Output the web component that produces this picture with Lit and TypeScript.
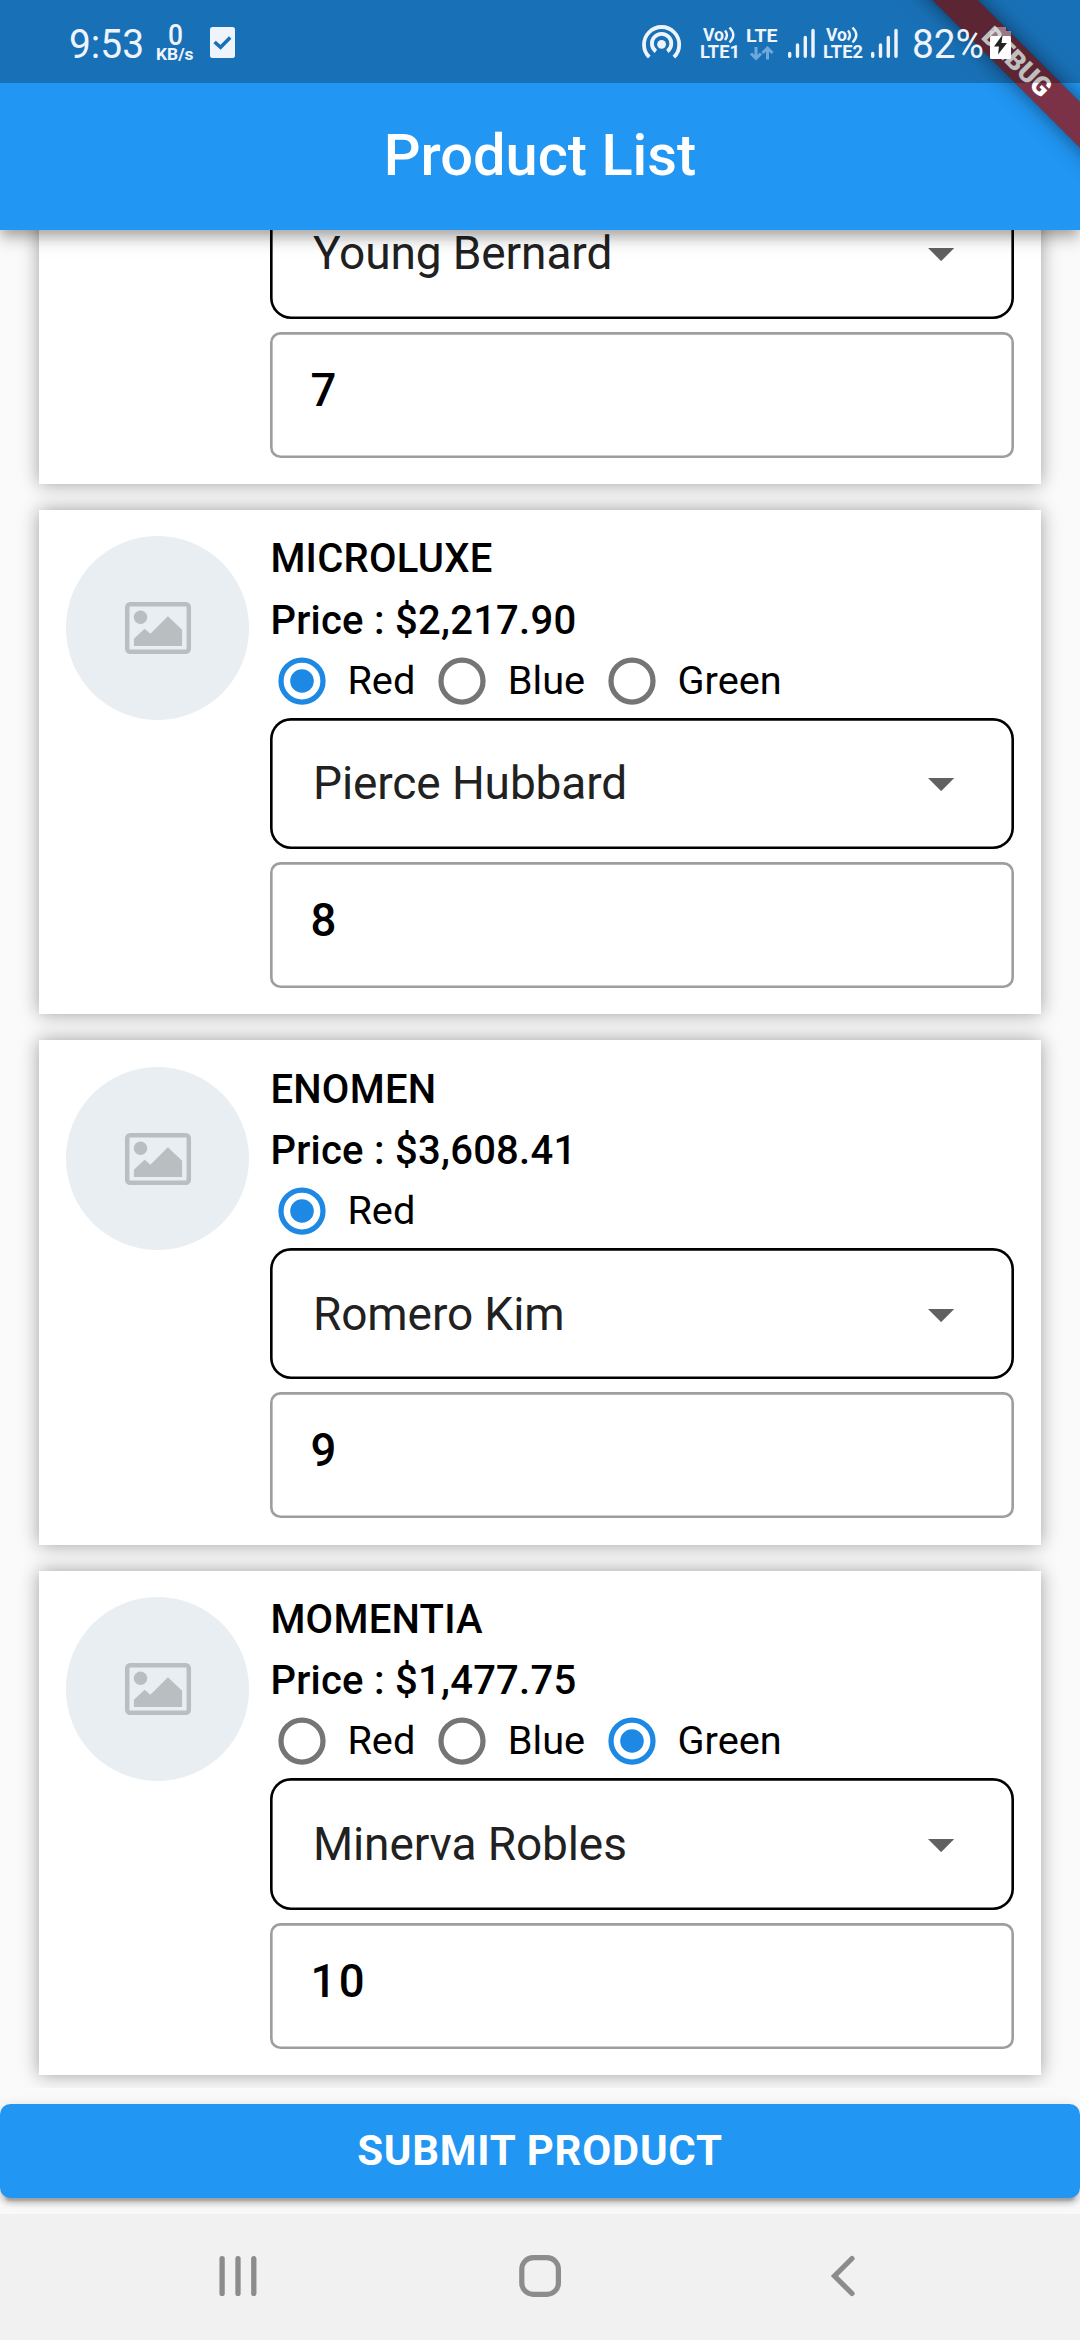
import { LitElement, html, css, svg, nothing } from "lit";
import { customElement, property } from "lit/decorators.js";

interface Product {
  name?: string;
  price?: string;
  colors: string[];
  selected?: string;
  person: string;
  quantity: string;
}

const PRODUCTS: Product[] = [
  { colors: [], person: "Young Bernard", quantity: "7" },
  { name: "MICROLUXE", price: "$2,217.90", colors: ["Red", "Blue", "Green"], selected: "Red", person: "Pierce Hubbard", quantity: "8" },
  { name: "ENOMEN", price: "$3,608.41", colors: ["Red"], selected: "Red", person: "Romero Kim", quantity: "9" },
  { name: "MOMENTIA", price: "$1,477.75", colors: ["Red", "Blue", "Green"], selected: "Green", person: "Minerva Robles", quantity: "10" },
];

@customElement("product-card")
export class ProductCard extends LitElement {
  @property({ attribute: false }) product!: Product;

  static styles = css`
    :host {
      display: flex;
      flex: none;
      box-sizing: border-box;
      height: 504.1px;
      padding: 26.25px;
      gap: 21px;
      align-items: flex-start;
      background: #fff;
      box-shadow: 0 0 17.8px #9e9e9e;
    }
    .avatar {
      flex: none;
      width: 183.75px;
      height: 183.75px;
      border-radius: 50%;
      background: #e8eef1;
      display: flex;
      align-items: center;
      justify-content: center;
    }
    .avatar svg { width: 68px; height: 54px; }
    .hidden-avatar { visibility: hidden; }
    .body {
      flex: 1;
      height: 451.6px;
      display: flex;
      flex-direction: column;
      justify-content: flex-end;
    }
    .name, .price {
      font-size: 40px;
      line-height: 46px;
      font-weight: 500;
      letter-spacing: 0.25px;
      white-space: pre;
    }
    .name { height: 61.2px; }
    .price { height: 60px; }
    .colors {
      display: flex;
      align-items: center;
      height: 46px;
      margin-bottom: 14px;
      padding-left: 7.5px;
      gap: 23px;
    }
    .option {
      display: flex;
      align-items: center;
      gap: 21.5px;
      font-size: 39.7px;
      line-height: 46px;
    }
    .option svg { width: 48px; height: 48px; flex: none; }
    .dropdown {
      box-sizing: border-box;
      height: 131.25px;
      padding: 0 60px 0 42.6px;
      display: flex;
      align-items: center;
      justify-content: space-between;
      border-radius: 21px;
      box-shadow: inset 0 0 0 2.625px #000;
      font-size: 46px;
      letter-spacing: -0.1px;
      line-height: 48px;
      color: #212121;
    }
    .dropdown svg {
      width: 26.25px;
      height: 13.1px;
      display: block;
      padding-top: 3px;
    }
    .quantity {
      box-sizing: border-box;
      height: 126px;
      margin-top: 13.1px;
      padding: 31px 40px;
      border-radius: 10.5px;
      box-shadow: inset 0 0 0 2.625px #9e9e9e;
      font-size: 45.5px;
      letter-spacing: 2.5px;
      line-height: 56px;
      font-weight: 500;
    }
  `;

  private radio(on: boolean) {
    const c = on ? "#1e88e5" : "#757575";
    return html`<svg viewBox="0 0 48 48">
      <circle cx="24" cy="24" r="21" fill="none" stroke=${c} stroke-width="5.25" />
      ${on ? svg`<circle cx="24" cy="24" r="11.8" fill=${c} />` : nothing}
    </svg>`;
  }

  render() {
    const p = this.product;
    return html`
      <div class="avatar ${p.name ? "" : "hidden-avatar"}">
        <svg viewBox="0 0 68 54">
          <rect x="3.2" y="3.2" width="61.6" height="47.6" rx="3" fill="none" stroke="#b9bec1" stroke-width="4.5" />
          <circle cx="16.5" cy="16.3" r="6.7" fill="#b9bec1" />
          <path d="M9.9 37.7 20.6 27.7 26.4 32.7 43.9 15.3 58.1 28.7V45H9.9Z" fill="#b9bec1" />
        </svg>
      </div>
      <div class="body">
        ${p.name
          ? html`<div class="name">${p.name}</div>
              <div class="price">Price : ${p.price}</div>
              <div class="colors">
                ${p.colors.map((c) => html`<div class="option">${this.radio(c === p.selected)}<span>${c}</span></div>`)}
              </div>`
          : nothing}
        <div class="dropdown">
          <span class="person">${p.person}</span>
          <svg viewBox="0 0 10 5"><path d="M0 0H10L5 5Z" fill="#616161" /></svg>
        </div>
        <div class="quantity">${p.quantity}</div>
      </div>
    `;
  }
}

@customElement("app-root")
export class AppRoot extends LitElement {
  static styles = css`
    :host {
      display: block;
      font-family: Roboto, "Liberation Sans", sans-serif;
      color: #000;
    }
    .screen {
      position: relative;
      width: 1080px;
      height: 2340px;
      overflow: hidden;
      display: flex;
      flex-direction: column;
      background: #fafafa;
    }
    .appbar {
      position: relative;
      z-index: 1;
      flex: none;
      box-sizing: border-box;
      height: 230px;
      padding-top: 83px;
      padding-bottom: 3px;
      display: flex;
      align-items: center;
      justify-content: center;
      background: #2196f3;
      color: #fff;
      font-size: 57.75px;
      font-weight: 500;
      line-height: 68px;
      box-shadow: 0 5.25px 10.5px -2.6px rgba(0, 0, 0, 0.2), 0 10.5px 13px 0 rgba(0, 0, 0, 0.14),
        0 2.6px 26px 0 rgba(0, 0, 0, 0.12);
    }
    .list {
      flex: none;
      box-sizing: border-box;
      height: 1858px;
      padding: 0 39.375px 13.1px;
      overflow: hidden;
      display: flex;
      flex-direction: column;
      justify-content: flex-end;
      gap: 26.25px;
    }
    .footer {
      flex: none;
      height: 126px;
      display: flex;
      align-items: center;
    }
    .submit {
      flex: 1;
      box-sizing: border-box;
      height: 94.5px;
      padding-bottom: 2px;
      display: flex;
      align-items: center;
      justify-content: center;
      border-radius: 10.5px;
      background: #2196f3;
      color: #fff;
      font-size: 42px;
      font-weight: 700;
      letter-spacing: 0.75px;
      box-shadow: 0 8px 2.6px -5.25px rgba(0, 0, 0, 0.2), 0 5.25px 5.25px rgba(0, 0, 0, 0.14),
        0 2.6px 13px rgba(0, 0, 0, 0.12);
    }
    .nav {
      flex: none;
      height: 126px;
      display: flex;
      align-items: center;
      justify-content: space-between;
      box-sizing: border-box;
      padding: 0 215px 2px;
      background: #f1f1f1;
    }
    .nav svg { width: 46px; height: 46px; }
    .banner {
      position: absolute;
      z-index: 2;
      left: 816.7px;
      top: 46.1px;
      width: 400px;
      height: 32px;
      transform: rotate(45deg);
      background: rgba(183, 28, 28, 0.63);
      color: #fff;
      font-size: 26.8px;
      line-height: 32px;
      font-weight: 900;
      text-align: center;
    }
    .banner-shadow {
      position: absolute;
      z-index: 2;
      left: 816.7px;
      top: 46.1px;
      width: 400px;
      height: 32px;
      transform: rotate(45deg);
      box-shadow: 0 0 20px rgba(0, 0, 0, 0.5);
      background: rgba(0, 0, 0, 0.42);
    }
    .status {
      position: absolute;
      z-index: 3;
      left: 0;
      top: 0;
      width: 1080px;
      height: 83px;
      background: rgba(0, 0, 0, 0.25);
    }
    .status svg { display: block; }
    .status text { fill: #eff4fc; }
    .thin { font-size: 40px; }
    .tag { font-size: 18px; font-weight: 700; }
  `;

  private bars(x: number) {
    return svg`<g stroke="#eff4fc" stroke-width="3.4" stroke-linecap="round">
      <path d=${`M${x + 1.7} 53.5V56.3M${x + 9.5} 45V56.3M${x + 17.3} 37.5V56.3M${x + 25} 30.5V56.3`} />
    </g>`;
  }

  private volte(x: number, n: string) {
    return svg`
      <text class="tag" x=${x + 3} y="41" textLength="21" lengthAdjust="spacingAndGlyphs">Vo</text>
      <path d=${`M${x + 25} 30.5Q${x + 29} 35 ${x + 25} 40M${x + 29.5} 27.5Q${x + 37} 35 ${x + 29.5} 42.5`} fill="none" stroke="#eff4fc" stroke-width="2.4" />
      <text class="tag" x=${x} y="58" textLength="40" lengthAdjust="spacingAndGlyphs">LTE${n}</text>`;
  }

  render() {
    return html`
      <div class="screen">
        <div class="appbar">Product List</div>
        <div class="list">${PRODUCTS.map((p) => html`<product-card .product=${p}></product-card>`)}</div>
        <div class="footer"><div class="submit">SUBMIT PRODUCT</div></div>
        <div class="nav">
          <svg viewBox="0 0 46 46"><path d="M7.1 5.6V40.4M23 5.6V40.4M38.8 5.6V40.4" stroke="#8c8c8c" stroke-width="5.3" stroke-linecap="round" /></svg>
          <svg viewBox="0 0 46 46"><rect x="4.8" y="4.6" width="36.6" height="36.8" rx="11.5" fill="none" stroke="#8c8c8c" stroke-width="5.2" /></svg>
          <svg viewBox="0 0 46 46"><path d="M33 5.5 15.5 23 33 40.5" fill="none" stroke="#8c8c8c" stroke-width="5.2" stroke-linecap="round" /></svg>
        </div>
        <div class="banner-shadow"></div>
        <div class="banner">DEBUG</div>
        <div class="status">
          <svg width="1080" height="83" viewBox="0 0 1080 83">
            <text class="thin" x="69" y="58.3" textLength="75" lengthAdjust="spacingAndGlyphs">9:53</text>
            <text x="168" y="45" font-size="29" font-weight="500" textLength="15" lengthAdjust="spacingAndGlyphs">0</text>
            <text x="156" y="60.3" font-size="16.5" font-weight="700" textLength="37.5" lengthAdjust="spacingAndGlyphs">KB/s</text>
            <rect x="210" y="27" width="25" height="31" rx="2.5" fill="#eff4fc" />
            <path d="M214.6 42 220.6 47.3 230.2 37.6" fill="none" stroke="#1a70b6" stroke-width="3.6" />
            <g fill="none" stroke="#eff4fc" stroke-width="3.8">
              <circle cx="661.6" cy="44.3" r="4.4" fill="#eff4fc" stroke="none" />
              <path d="M655.9 51.4A9.7 9.7 0 1 1 667.3 51.4" />
              <path d="M649.3 57.2A17.6 17.6 0 1 1 673.9 57.2" />
            </g>
            ${this.volte(700, "1")}
            <text class="tag" x="746" y="41.6" textLength="31.5" lengthAdjust="spacingAndGlyphs">LTE</text>
            <path d="M756 47V58M751 53.5 756 58.5 761 53.5M767.5 59.5V48.5M762.5 53 767.5 48 772.5 53" fill="none" stroke="#6fa9dc" stroke-width="3" />
            ${this.bars(788)}
            ${this.volte(823, "2")}
            ${this.bars(871)}
            <text class="thin" x="912" y="58.3" textLength="72" lengthAdjust="spacingAndGlyphs">82%</text>
            <path d="M994 27H1006V31H1011V37H990V31H994Z" fill="#eff4fc" opacity="0.4" />
            <rect x="990" y="36" width="21" height="23" rx="1.5" fill="#fff" />
            <path d="M1002 35.5 994 46.5H999L998 54.5 1007 43H1001.500L1002.500 35.500Z" fill="#222" />
          </svg>
        </div>
      </div>
    `;
  }
}
